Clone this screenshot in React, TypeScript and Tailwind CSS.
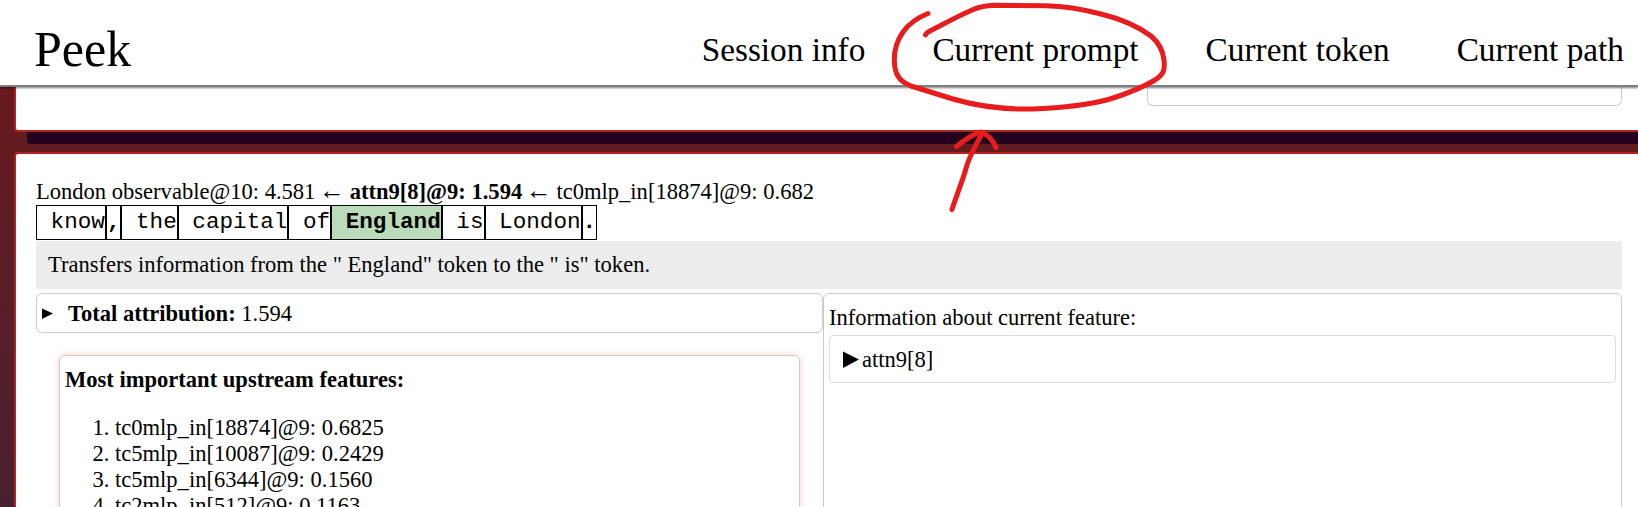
const navItems = ["Session info", "Current prompt", "Current token", "Current path"];

const tokens = [
  { text: " know" },
  { text: ",", bold: true },
  { text: " the" },
  { text: " capital" },
  { text: " of" },
  { text: " England", active: true },
  { text: " is" },
  { text: " London" },
  { text: ".", bold: true },
];

const upstream = [
  "tc0mlp_in[18874]@9: 0.6825",
  "tc5mlp_in[10087]@9: 0.2429",
  "tc5mlp_in[6344]@9: 0.1560",
  "tc2mlp_in[512]@9: 0.1163",
];

function Header() {
  return (
    <header className="relative z-10 flex h-[87px] shrink-0 items-center justify-between border-b-2 border-[#7d817e] bg-white pt-3 pr-[14px] pl-[34px] shadow-[0_1px_2px_rgba(0,0,0,0.5)]">
      <div className="text-[50px] leading-[58px]">Peek</div>
      <nav className="mt-[3px] flex gap-[67px] text-[33.3px] leading-[38px]">
        {navItems.map((item) => (
          <a key={item}>{item}</a>
        ))}
      </nav>
    </header>
  );
}

function Arrow() {
  return <span className="-mr-px -ml-[2px] text-[26px] leading-none">←</span>;
}

function Annotation() {
  return (
    <svg
      className="pointer-events-none absolute top-0 left-[880px] z-20"
      width="300"
      height="230"
      viewBox="880 0 300 230"
      fill="none"
      stroke="#e81c1c"
      strokeWidth="5"
      strokeLinecap="round"
      strokeLinejoin="round"
    >
      <path d="M928 13.5C919 17 910 22 903 32C896 42 893 55 895 68C897 78 902 82 911 86L953 99C980 107 1005 109.500 1032 109C1060 108 1085 106 1110 99C1126 94 1145 86 1155 80C1164 74 1165 70 1164 60C1163 51 1158 42 1151 36C1139 27 1121 19 1101 14C1078 8 1060 6 1046 5.700L994 5.300C986 5.500 979 7 972 10C956 17 938 27 930 31C927 32.500 926 33.500 925.500 35" />
      <path d="M952 209.500C957 194 963 180 967 165C971 153 976 145 981.500 134.500" />
      <path d="M956.500 146.500C962 142 972 134 981 132C988 135 993 140 996 147.500" />
    </svg>
  );
}

export default function App() {
  return (
    <div className="relative flex h-[507px] w-full flex-col overflow-hidden bg-linear-to-b from-[#6e1616] to-[#4a2030] font-['Liberation_Serif',serif] text-[22.56px] leading-[26px] text-black">
      <Header />
      <Annotation />
      <section className="ml-[14px] flex h-[45px] w-[1700px] shrink-0 rounded-b border-2 border-t-0 border-[#b22222] bg-white pl-[1131px] shadow-[13px_12px_0_#22001e]">
        <div className="h-[19px] w-[475px] rounded-b-[6px] border border-t-0 border-[#ccc]" />
      </section>

      <section className="mt-5 ml-[14px] flex h-[600px] w-[1700px] shrink-0 flex-col rounded border-2 border-[#b22222] bg-white pt-6 pl-5">
        <div className="h-[27px] whitespace-pre">
          London observable@10: 4.581 <Arrow /> <b>attn9[8]@9: 1.594</b> <Arrow /> tc0mlp_in[18874]@9: 0.682
        </div>
        <div className="flex h-[35px] font-['Courier_New','Liberation_Mono',monospace] text-[22.64px] whitespace-pre">
          {tokens.map((t, i) => (
            <span
              key={i}
              className={
                t.active
                  ? "border border-black bg-[#bbdcbb] pt-[3px] font-bold"
                  : t.bold
                    ? "border border-black pt-[3px] font-bold"
                    : "border border-black pt-[3px]"
              }
            >
              {t.text}
            </span>
          ))}
        </div>
        <div className="mt-px h-12 w-[1586px] bg-[#ededed] px-3 pt-[11px]">
          Transfers information from the " England" token to the " is" token.
        </div>

        <div className="mt-1 flex w-[1586px] grow">
          <div className="w-[787px]">
            <div className="flex h-10 items-center rounded-[6px] border border-[#ccc] pt-0.5 pl-[5px]">
              <svg width="11" height="12" viewBox="0 0 11 12" className="mr-[15px]">
                <path d="M0 .5L11 5.500L0 11Z" />
              </svg>
              <b>Total attribution:</b>
              <span className="ml-[5.6px]">1.594</span>
            </div>
            <div className="mt-[22px] mr-[23px] ml-[23px] h-[300px] rounded-[6px] border border-[#ccc] pt-[11px] pl-[5px] shadow-[0_0_6px_rgba(250,128,114,0.4)]">
              <b>Most important upstream features:</b>
              <ol className="mt-[22px] list-decimal pl-[50px]">
                {upstream.map((f) => (
                  <li key={f}>{f}</li>
                ))}
              </ol>
            </div>
          </div>
          <div className="grow rounded-[6px] border border-[#ccc] px-[5px] pt-[11px]">
            <div>Information about current feature:</div>
            <div className="mt-1 flex h-12 items-center rounded-[4px] border border-[#ddd] pt-px pl-[13px]">
              <svg width="16" height="18" viewBox="0 0 16 18" className="mr-[3px]">
                <path d="M0 .5L16 8.500L0 17Z" />
              </svg>
              attn9[8]
            </div>
          </div>
        </div>
      </section>
    </div>
  );
}
